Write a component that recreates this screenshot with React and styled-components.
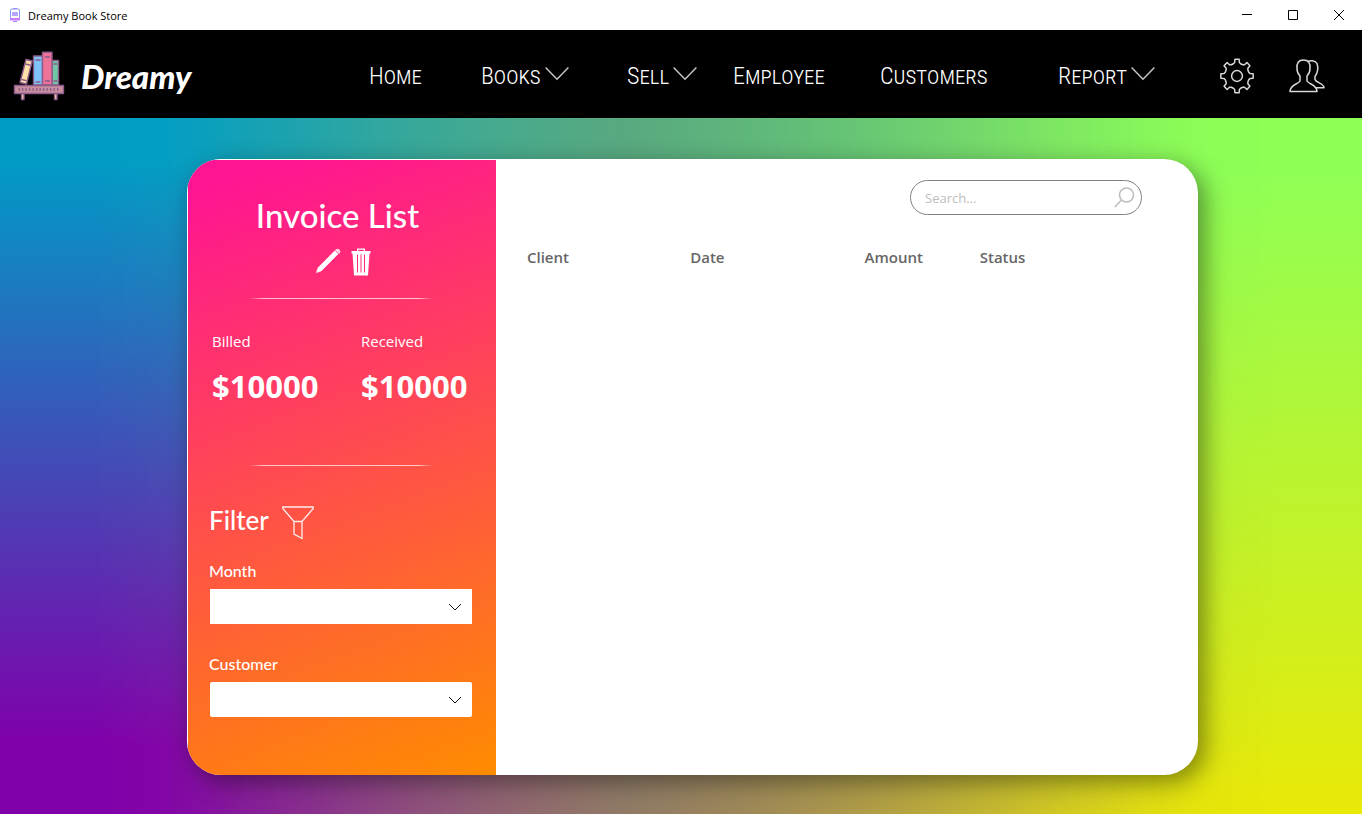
import React from "react";
import styled, { createGlobalStyle } from "styled-components";

const Global = createGlobalStyle`
  *, *::before, *::after { box-sizing: border-box; }
  body { margin: 0; background: #fff; font-family: "Open Sans", "Noto Sans", sans-serif; }
  button, input, select { font: inherit; color: inherit; }
  button { background: none; border: 0; padding: 0; }
`;

const Window = styled.div`
  min-height: 100vh;
  display: flex;
  flex-direction: column;
  padding: 0 1px 1px 0;
`;

const TitleBar = styled.header`
  height: 30px;
  display: flex;
  align-items: center;
  padding-left: 9px;
  gap: 7px;
  font-size: 11px;
  color: #000;
`;

const WindowControls = styled.div`
  margin-left: auto;
  display: flex;
`;

const WindowButton = styled.button`
  width: 46px;
  height: 30px;
  display: grid;
  place-items: center;
`;

const TopBar = styled.nav`
  height: 88px;
  padding-top: 4px;
  background: #000;
  color: #fff;
  display: grid;
  grid-template-columns: 369fr 112fr 146fr 106fr 147fr 178fr 162fr 69fr 73fr;
  align-items: center;
`;

const Brand = styled.a`
  display: flex;
  align-items: center;
  gap: 16px;
  padding-left: 13px;
  color: #fff;
  text-decoration: none;
  font-family: Lato, sans-serif;
  font-size: 33px;
  font-weight: 900;
  font-style: italic;
`;

const NavButton = styled.button`
  display: flex;
  align-items: center;
  gap: 4px;
  font-family: "Roboto Condensed", Roboto, sans-serif;
  font-size: 24px;
  font-weight: 300;
  font-variant: small-caps;
  white-space: nowrap;
  svg { margin-bottom: 5px; }
`;

const IconButton = styled.button`
  display: flex;
`;

const Stage = styled.main`
  position: relative;
  isolation: isolate;
  flex: 1;
  display: flex;
  padding: 41px 164px 39px 187px;
  background: linear-gradient(#90ff55 8%, #e9e907 100%);
  &::before, &::after {
    content: "";
    position: absolute;
    inset: 0;
    z-index: -1;
  }
  &::before {
    background: linear-gradient(#009cc6 6%, #8000aa 90%);
    mask-image: linear-gradient(
      to right,
      #000 7%,
      rgba(0, 0, 0, 0.97) 14%,
      rgba(0, 0, 0, 0.88) 22%,
      rgba(0, 0, 0, 0.5) 48%,
      rgba(0, 0, 0, 0.1) 78%,
      rgba(0, 0, 0, 0.03) 86%,
      transparent 94%
    );
  }
  &::after {
    background: linear-gradient(to right, transparent 12%, rgba(110, 135, 110, 0.5) 46%, transparent 88%);
  }
`;

const Card = styled.div`
  flex: 1;
  display: flex;
  min-height: 616px;
  border-radius: 34px;
  overflow: hidden;
  background: #fff;
  box-shadow: 7px 7px 24px rgba(0, 0, 0, 0.42);
`;

const Sidebar = styled.aside`
  width: 309px;
  flex: none;
  padding: 37px 24px 0 21px;
  color: #fff;
  background: linear-gradient(160deg, #ff1493 4%, #ff8c00 100%);
  border: solid rgba(255, 255, 255, 0.6);
  border-width: 1px 0 0 1px;
  background-clip: padding-box;
`;

const Title = styled.h1`
  margin: 0;
  padding-right: 6px;
  font-family: Lato, sans-serif;
  font-size: 33px;
  line-height: 36px;
  font-weight: 500;
  text-align: center;
`;

const Actions = styled.div`
  display: flex;
  justify-content: center;
  gap: 10px;
  margin: 15px 0 22px 4px;
`;

const Divider = styled.hr`
  width: 184px;
  height: 1px;
  margin: 0 auto;
  border: 0;
  background: linear-gradient(to right, transparent, rgba(255, 255, 255, 0.7) 8% 92%, transparent);
`;

const Totals = styled.dl`
  display: grid;
  grid-template-columns: 149px 1fr;
  height: 166px;
  margin: 0;
  padding: 30px 0 0 3px;
`;

const Total = styled.div`
  dt { font-size: 15px; line-height: 24px; }
  dd { margin: 15px 0 0; font-size: 31px; line-height: 36px; font-weight: 700; }
`;

const FilterTitle = styled.h2`
  display: flex;
  gap: 13px;
  margin: 40px 0 19px;
  font-family: Lato, sans-serif;
  font-size: 26px;
  line-height: 28px;
  font-weight: 500;
`;

const Field = styled.label`
  display: block;
  margin-bottom: 28px;
  font-family: Lato, sans-serif;
  font-size: 16px;
  line-height: 24px;
  font-weight: 500;
`;

const SelectBox = styled.span`
  display: grid;
  align-items: center;
  margin: 6px 0 0 1px;
  > * { grid-area: 1 / 1; }
  svg { justify-self: end; margin-right: 11px; pointer-events: none; }
`;

const Select = styled.select`
  appearance: none;
  width: 100%;
  height: 35px;
  padding: 0 32px 0 10px;
  border: 0;
  border-radius: ${(p) => p.$radius}px;
  background: #fff;
  color: #222;
`;

const Content = styled.section`
  flex: 1;
  min-width: 0;
  padding: 21px 56px 0 30px;
`;

const Search = styled.label`
  width: 232px;
  height: 35px;
  margin-left: auto;
  padding: 0 6px 0 14px;
  display: flex;
  align-items: center;
  border: 1px solid #808080;
  border-radius: 18px;
`;

const SearchInput = styled.input`
  flex: 1;
  min-width: 0;
  padding: 0;
  border: 0;
  outline: 0;
  background: none;
  font-size: 13px;
  &::placeholder { color: #bdbdbd; opacity: 1; }
`;

const InvoiceTable = styled.table`
  width: 100%;
  margin-top: 30px;
  border-collapse: collapse;
  table-layout: fixed;
  color: #666;
  th { padding: 0 1px; font-size: 15px; line-height: 24px; font-weight: 600; text-align: left; }
`;

const Column = styled.col`
  width: ${(p) => p.$share}%;
`;

const Chevron = () => (
  <svg width="24" height="14" viewBox="0 0 24 14" fill="none" stroke="#c4c4c4" strokeWidth="1.5" aria-hidden="true">
    <path d="M.6 .6 12 12.3 23.4 .6" />
  </svg>
);

const SelectChevron = () => (
  <svg width="12" height="8" viewBox="0 0 12 8" fill="none" stroke="#111" aria-hidden="true">
    <path d="M0 1 6 7 12 1" />
  </svg>
);

const AppIcon = () => (
  <svg width="12" height="14" viewBox="0 0 12 14" fill="none" aria-hidden="true">
    <path d="M1.5 10V2Q1.5 1 3 1H9Q10.5 1 10.5 2V10" stroke="#8a9df5" />
    <path d="M1 10H11V12.5H1Z" fill="#c77dff" />
    <path d="M3 4H9V8H3Z" fill="#b3a6fb" />
    <path d="M4 13.5H8M4 .5H8" stroke="#9d8cf8" />
  </svg>
);

const BooksLogo = () => (
  <svg width="52" height="50" viewBox="0 0 51 50" stroke="#8d5a8c" strokeWidth="1.4" strokeLinejoin="round" aria-hidden="true">
    <path d="M12.5 8.5 18.7 10 13 33 6.5 31.5Z" fill="#ffe1a8" />
    <path d="M12 13 17 14.2M8 28.5 13 29.6" />
    <path d="M38.5 9.5H45V34H38.5Z" fill="#6fc7a5" />
    <path d="M20 5H29V34H20Z" fill="#7fc4f7" />
    <path d="M29 1.2H38.5V34H29Z" fill="#ef7398" />
    <path d="M22 9H27M22 31H27M31.5 6H36.5M31.5 30H36.5M40 13H44M40 30H44" />
    <path d="M8 42.5H10.5V48.5H8ZM41 42.5H43.5V48.5H41Z" fill="#ffe1a8" />
    <path d="M1 34.5H50V42.5H1Z" fill="#c88f9e" />
    <path d="M5 38.5H46" strokeWidth="3" strokeDasharray="1.3 2.2" />
  </svg>
);

const teeth = () => {
  const points = [];
  for (let i = 0; i < 8; i += 1) {
    const a = (i * Math.PI) / 4;
    [[-0.3, 12.3], [-0.18, 13.2], [-0.13, 16.3], [0.13, 16.3], [0.18, 13.2], [0.3, 12.3]].forEach(([d, r]) => {
      points.push(`${(17 + r * Math.sin(a + d)).toFixed(2)} ${(18 + r * 1.04 * -Math.cos(a + d)).toFixed(2)}`);
    });
  }
  return `M${points.join("L")}Z`;
};

const Gear = () => (
  <svg width="34" height="36" viewBox="0 0 34 36" fill="none" stroke="#d8d8d8" strokeWidth="1.5" strokeLinejoin="round" aria-hidden="true">
    <path d={teeth()} />
    <circle cx="17" cy="18" r="5.4" />
  </svg>
);

const People = () => (
  <svg width="36" height="34" viewBox="0 0 36 34" fill="none" stroke="#d8d8d8" strokeWidth="1.5" strokeLinejoin="round" aria-hidden="true">
    <path d="M14.5 1C9.5 1 7.5 4 8 9.5 8 13 9.5 15.5 11 17V22C9 25.5 1 25.5 1 32.5H28C28 25.5 20 25.5 18 22V17C19.5 15.5 21 13 21 9.5 21.5 4 19.5 1 14.5 1Z" />
    <path d="M18.5 2.8C20.5 1.2 26 1 28 4.5 29.5 9 28.5 14 26 17.5V20.5C27 24 35 24 35 28.7H27" />
  </svg>
);

const Pencil = () => (
  <svg width="26" height="26" viewBox="0 0 26 26" aria-hidden="true">
    <path d="M2 23.5 3.2 19.2 19.8 2.6 23.3 6.1 6.8 22.7 2.5 24Z" fill="#fff" />
    <path d="M20.5 1.5Q22.5 0 24.5 1.5 26 3.5 24.5 5.5L24 6 20 2Z" fill="#fff" fillOpacity=".8" />
    <path d="M.8 25.2 2.6 19.8 6.2 23.4Z" fill="#fff" fillOpacity=".7" />
  </svg>
);

const Trash = () => (
  <svg width="20" height="28" viewBox="0 0 20 28" aria-hidden="true">
    <path d="M6 3V.5H14V3H19.5V5.5H18.5L17 27.5H3L1.5 5.5H.5V3ZM7.3 3H12.7V1.8H7.3ZM6 6.5V24.5H7V6.5ZM9.5 6.5V24.5H10.5V6.5ZM13 6.5V24.5H14V6.5Z" fill="#fff" fillRule="evenodd" />
  </svg>
);

const Funnel = () => (
  <svg width="32" height="34" viewBox="0 0 32 34" fill="none" stroke="#fff" strokeWidth="1.3" strokeOpacity=".9" aria-hidden="true">
    <path d="M.8 1H31.2V2.5L20 15.5V32.5L12 28V15.5L.8 2.5ZM12 15.5H20" />
  </svg>
);

const Magnifier = () => (
  <svg width="21" height="21" viewBox="0 0 21 21" fill="none" stroke="#bdbdbd" strokeWidth="1.6" aria-hidden="true">
    <circle cx="12.5" cy="8" r="7" />
    <path d="M7.5 13 .8 20" />
  </svg>
);

const navItems = [
  ["Home", false],
  ["Books", true],
  ["Sell", true],
  ["Employee", false],
  ["Customers", false],
  ["Report", true],
];

export default function App() {
  return (
    <Window>
      <Global />
      <TitleBar>
        <AppIcon />
        <span>Dreamy Book Store</span>
        <WindowControls>
          <WindowButton aria-label="Minimize">
            <svg width="10" height="10" stroke="#000"><path d="M0 4.5H10" /></svg>
          </WindowButton>
          <WindowButton aria-label="Maximize">
            <svg width="10" height="10" stroke="#000" fill="none"><path d="M.5 .5H9.5V9.5H.5Z" /></svg>
          </WindowButton>
          <WindowButton aria-label="Close">
            <svg width="10" height="10" stroke="#000"><path d="M0 0 10 10M10 0 0 10" /></svg>
          </WindowButton>
        </WindowControls>
      </TitleBar>
      <TopBar>
        <Brand href="#home">
          <BooksLogo />
          <span>Dreamy</span>
        </Brand>
        {navItems.map(([label, menu]) => (
          <NavButton key={label}>
            {label}
            {menu && <Chevron />}
          </NavButton>
        ))}
        <IconButton aria-label="Settings"><Gear /></IconButton>
        <IconButton aria-label="Account"><People /></IconButton>
      </TopBar>
      <Stage>
        <Card>
          <Sidebar>
            <Title>Invoice List</Title>
            <Actions>
              <IconButton aria-label="Edit"><Pencil /></IconButton>
              <IconButton aria-label="Delete"><Trash /></IconButton>
            </Actions>
            <Divider />
            <Totals>
              <Total><dt>Billed</dt><dd>$10000</dd></Total>
              <Total><dt>Received</dt><dd>$10000</dd></Total>
            </Totals>
            <Divider />
            <FilterTitle>Filter <Funnel /></FilterTitle>
            <Field>
              Month
              <SelectBox><Select $radius={0}><option></option></Select><SelectChevron /></SelectBox>
            </Field>
            <Field>
              Customer
              <SelectBox><Select $radius={2}><option></option></Select><SelectChevron /></SelectBox>
            </Field>
          </Sidebar>
          <Content>
            <Search>
              <SearchInput type="search" placeholder="Search..." aria-label="Search" />
              <Magnifier />
            </Search>
            <InvoiceTable>
              <colgroup>
                <Column $share={26.5} />
                <Column $share={28.3} />
                <Column $share={18.7} />
                <Column $share={26.5} />
              </colgroup>
              <thead>
                <tr>
                  <th>Client</th>
                  <th>Date</th>
                  <th>Amount</th>
                  <th>Status</th>
                </tr>
              </thead>
            </InvoiceTable>
          </Content>
        </Card>
      </Stage>
    </Window>
  );
}
